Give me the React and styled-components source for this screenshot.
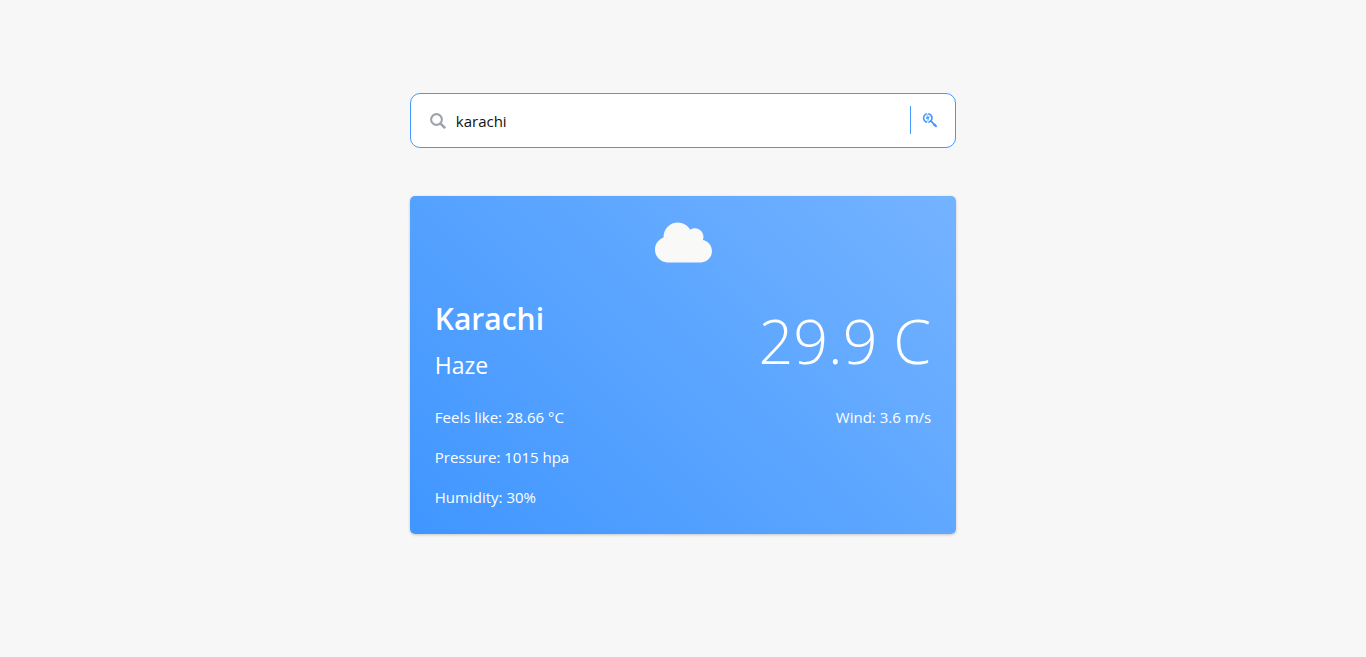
import React from "react";
import styled, { createGlobalStyle } from "styled-components";
import { FaCloud, FaSearchengin } from "react-icons/fa";

const GlobalStyle = createGlobalStyle`
  * { box-sizing: border-box; }
  body {
    margin: 0;
    background: #f7f7f7;
    font-family: "Segoe UI", "Open Sans", "Noto Sans", sans-serif;
    font-size: 15px;
    line-height: 24px;
  }
`;

const Page = styled.main`
  width: 40%;
  min-width: 320px;
  margin: 0 auto;
  padding: 93px 0 48px;
`;

const SearchBar = styled.form`
  display: flex;
  align-items: center;
  height: 55px;
  margin-bottom: 48px;
  padding: 0 12px 0 19px;
  background: #fff;
  border: 1px solid #4299ff;
  border-radius: 10px;
`;

const SearchGlyph = styled.svg`
  width: 16px;
  height: 16px;
  fill: none;
  stroke: #9ca3af;
`;

const SearchInput = styled.input`
  flex: 1;
  min-width: 0;
  padding: 0 10px;
  border: 0;
  outline: 0;
  background: transparent;
  color: #111;
  font: inherit;
`;

const SearchButton = styled.button`
  display: flex;
  height: 28px;
  margin-bottom: 2px;
  padding: 6px 5px 6px 11px;
  border: 0;
  border-left: 1px solid #4299ff;
  background: transparent;
  color: #4299ff;
  cursor: pointer;
`;

const Card = styled.section`
  padding: 18px 24px 25px 25px;
  border-radius: 5px;
  background: linear-gradient(45deg, #4096ff, #74b3ff);
  box-shadow: 0 1px 3px rgba(0, 0, 0, 0.2);
  color: #fff;
`;

const IconRow = styled.div`
  display: flex;
  justify-content: center;
  height: 57px;
  margin-bottom: 26px;
  color: #f9f9f8;
`;

const Summary = styled.div`
  display: flex;
  justify-content: space-between;
  align-items: center;
  margin-bottom: 20px;
`;

const City = styled.h1`
  margin: 0 0 4px;
  font-size: 30px;
  font-weight: 600;
  line-height: 44px;
`;

const Condition = styled.p`
  margin: 0;
  font-size: 23px;
  line-height: 40px;
`;

const Temperature = styled.p`
  margin: 0;
  padding-right: 1px;
  font-size: 61px;
  font-weight: 300;
  line-height: 84px;
`;

const Details = styled.div`
  display: flex;
  justify-content: space-between;
  padding-right: 1px;
`;

const DetailList = styled.ul`
  display: flex;
  flex-direction: column;
  gap: 16px;
  margin: 0;
  padding: 0;
  list-style: none;
`;

export default function App() {
  return (
    <>
      <GlobalStyle />
      <Page>
        <SearchBar onSubmit={(e) => e.preventDefault()}>
          <SearchGlyph viewBox="0 0 16 16" aria-hidden="true">
            <circle cx="6.5" cy="6.5" r="5.4" strokeWidth="2.1" />
            <path d="M10.3 10.3 15.2 15.2" strokeWidth="2.6" />
          </SearchGlyph>
          <SearchInput aria-label="City" defaultValue="karachi" />
          <SearchButton type="submit" aria-label="Search">
            <FaSearchengin size={16} />
          </SearchButton>
        </SearchBar>
        <Card>
          <IconRow>
            <FaCloud size={57} />
          </IconRow>
          <Summary>
            <div>
              <City>Karachi</City>
              <Condition>Haze</Condition>
            </div>
            <Temperature>29.9 C</Temperature>
          </Summary>
          <Details>
            <DetailList>
              <li>Feels like: 28.66 °C</li>
              <li>Pressure: 1015 hpa</li>
              <li>Humidity: 30%</li>
            </DetailList>
            <DetailList>
              <li>Wind: 3.6 m/s</li>
            </DetailList>
          </Details>
        </Card>
      </Page>
    </>
  );
}
